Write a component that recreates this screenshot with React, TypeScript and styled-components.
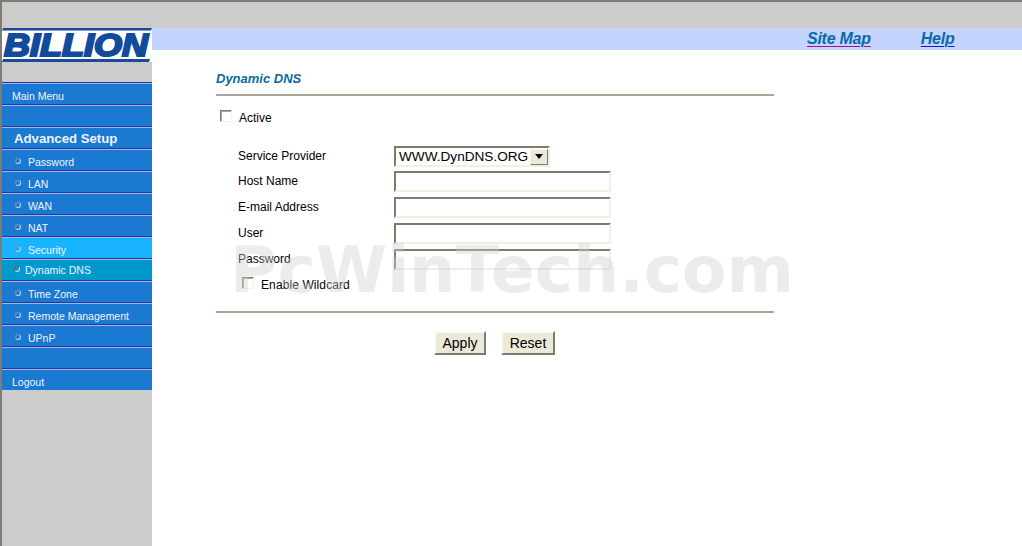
import React from "react";
import styled, { createGlobalStyle } from "styled-components";

const Global = createGlobalStyle`
  html, body { margin: 0; padding: 0; background: #fff; overflow: hidden; }
  #root { width: 1022px; height: 546px; }
`;

const Page = styled.div`
  position: relative;
  box-sizing: border-box;
  width: 1022px;
  height: 546px;
  display: grid;
  grid-template-columns: 150px 1fr;
  grid-template-rows: 26px 1fr;
  border-top: 2px solid #807c70;
  border-left: 2px solid #807c70;
  font-family: "Liberation Sans", Arial, sans-serif;
  background: #fff;
  overflow: hidden;
`;

const TopStrip = styled.div`
  grid-column: 1 / 3;
  background: #cccccc;
`;

const Sidebar = styled.aside`
  background: #cccccc;
  display: flex;
  flex-direction: column;
`;

const LogoSvg = styled.svg`
  display: block;
  width: 150px;
  height: 34px;
`;

const LogoGap = styled.div`
  height: 20px;
`;

const MenuItem = styled.div<{ $tone?: "normal" | "active" | "current"; $heading?: boolean; $pad?: number; $raised?: boolean }>`
  box-sizing: border-box;
  height: 22px;
  border-top: 1px solid #1f3a9c;
  box-shadow: inset 0 1px 0 #a4b4f0;
  background: ${(p) => (p.$tone === "active" ? "#18b4ff" : p.$tone === "current" ? "#0099cc" : "#1b79d2")};
  display: flex;
  align-items: center;
  gap: ${(p) => (p.$tone === "current" ? 5 : 7)}px;
  padding-left: ${(p) => p.$pad ?? 10}px;
  padding-top: ${(p) => (p.$raised ? 1 : 5)}px;
  color: #f0f4ff;
  font-size: ${(p) => (p.$heading ? "13.2px" : "10.5px")};
  font-weight: ${(p) => (p.$heading ? 700 : 400)};
  white-space: nowrap;
`;

const Bullet = styled.span<{ $dark?: boolean }>`
  box-sizing: border-box;
  width: 6px;
  height: 6px;
  margin-top: -3px;
  border-radius: 50%;
  border: 1px solid;
  border-color: ${(p) => (p.$dark ? "#6a5a58 #c0dce8 #c0dce8 #6a5a58" : "#7f90a5 #c8d4e4 #c8d4e4 #7f90a5")};
  flex: none;
`;

const Main = styled.main`
  background: #fff;
  display: flex;
  flex-direction: column;
`;

const LinkBar = styled.nav`
  height: 22px;
  background: #c4d4ff;
  display: flex;
  align-items: center;
  padding-left: 655px;
  gap: 50px;
`;

const TopLink = styled.a<{ $visited?: boolean }>`
  color: #0a6aa8;
  font-size: 16px;
  letter-spacing: -0.25px;
  font-weight: 700;
  font-style: italic;
  text-decoration: underline;
  text-decoration-color: ${(p) => (p.$visited ? "#a0108c" : "#0a18e8")};
  text-decoration-thickness: 1px;
  text-underline-offset: 2px;
`;

const Content = styled.section`
  width: 558px;
  margin-left: 64px;
  padding-top: 21px;
  display: flex;
  flex-direction: column;
`;

const Title = styled.h1`
  margin: 0;
  height: 23px;
  color: #0a6aa0;
  font-size: 13px;
  line-height: 15px;
  font-weight: 700;
  font-style: italic;
`;

const Rule = styled.hr<{ $top?: number }>`
  width: 100%;
  height: 2px;
  margin: ${(p) => p.$top ?? 0}px 0 0;
  border: 0;
  background: #aca899;
`;

const ActiveRow = styled.label`
  display: flex;
  align-items: center;
  gap: 7px;
  margin: 14px 0 0 4px;
  height: 16px;
  font-size: 12px;
  color: #000;
`;

const Check = styled.span`
  box-sizing: border-box;
  width: 12px;
  height: 12px;
  margin-top: -5px;
  background: #fff;
  border: 1px solid;
  border-color: #7d7a6e #f4f3ea #f4f3ea #7d7a6e;
  box-shadow: inset 1px 1px 0 #aca899;
`;

const FormGrid = styled.div`
  display: grid;
  grid-template-columns: 156px 1fr;
  grid-template-rows: 25px repeat(4, 26px);
  margin: 19px 0 0 22px;
  align-items: center;
  font-size: 12px;
  color: #000;
`;

const FieldLabel = styled.span`
  margin-top: -4px;
`;

const Field = styled.div`
  box-sizing: border-box;
  align-self: start;
  width: 217px;
  height: 21px;
  margin-top: 1px;
  background: #fff;
  border: 2px solid;
  border-color: #7d7a6e #f1efe2 #f1efe2 #7d7a6e;
`;

const Select = styled.div`
  box-sizing: border-box;
  align-self: start;
  width: 156px;
  height: 21px;
  margin-top: 1px;
  background: #fff;
  border: 2px solid;
  border-color: #7d7a6e #f1efe2 #f1efe2 #7d7a6e;
  display: flex;
  align-items: center;
  justify-content: space-between;
  padding-left: 3px;
  font-size: 13.6px;
  color: #000;
`;

const SelectArrow = styled.span`
  box-sizing: border-box;
  width: 18px;
  height: 16px;
  background: #ece9d8;
  border: 1px solid;
  border-color: #f8f7ee #7d7a6e #7d7a6e #f8f7ee;
  display: flex;
  align-items: center;
  justify-content: center;
  &::after {
    content: "";
    border-left: 4px solid transparent;
    border-right: 4px solid transparent;
    border-top: 5px solid #000;
  }
`;

const WildcardRow = styled.label`
  display: flex;
  align-items: center;
  gap: 7px;
  margin: 3px 0 0 26px;
  height: 16px;
  font-size: 12px;
  letter-spacing: 0.1px;
  color: #000;
`;

const Buttons = styled.div`
  display: flex;
  gap: 15px;
  margin: 18px 0 0 218px;
`;

const Button = styled.button<{ $width: number }>`
  box-sizing: border-box;
  width: ${(p) => p.$width}px;
  height: 24px;
  padding: 0;
  background: #ece9d8;
  border: 2px solid;
  border-color: #fbfaf4 #7d7a6e #7d7a6e #fbfaf4;
  font-family: "Liberation Sans", Arial, sans-serif;
  font-size: 14px;
  color: #000;
`;

const Watermark = styled.div`
  position: absolute;
  left: 228px;
  top: 235px;
  font-family: "DejaVu Sans", sans-serif;
  font-size: 64.7px;
  font-weight: 700;
  line-height: 66px;
  color: rgba(208, 208, 208, 0.4);
  white-space: nowrap;
  pointer-events: none;
`;

const items = ["Password", "LAN", "WAN", "NAT"];
const lower = ["Time Zone", "Remote Management", "UPnP"];

export default function App() {
  return (
    <Page>
      <Global />
      <TopStrip />
      <Sidebar>
        <LogoSvg viewBox="0 0 150 34" aria-label="Billion logo">
          <rect width="150" height="34" fill="#fff" />
          <polygon points="1,0 150,0 149,2.6 0,2.6" fill="#1a4a9c" />
          <polygon points="1,31 148,31 147,34 0,34" fill="#1a4a9c" />
          <text
            x="2"
            y="28"
            textLength="144"
            lengthAdjust="spacingAndGlyphs"
            fontFamily="'Liberation Sans', sans-serif"
            fontWeight="700"
            fontStyle="italic"
            fontSize="32"
            fill="#124a9c"
            stroke="#124a9c"
            strokeWidth="2.2"
          >
            BILLION
          </text>
        </LogoSvg>
        <LogoGap />
        <MenuItem>Main Menu</MenuItem>
        <MenuItem />
        <MenuItem $heading $pad={12} $raised>Advanced Setup</MenuItem>
        {items.map((t) => (
          <MenuItem key={t} $pad={13}><Bullet />{t}</MenuItem>
        ))}
        <MenuItem $tone="active" $pad={13}><Bullet />Security</MenuItem>
        <MenuItem $tone="current" $pad={12} $raised><Bullet $dark />Dynamic DNS</MenuItem>
        {lower.map((t) => (
          <MenuItem key={t} $pad={13}><Bullet />{t}</MenuItem>
        ))}
        <MenuItem />
        <MenuItem>Logout</MenuItem>
      </Sidebar>
      <Main>
        <LinkBar>
          <TopLink $visited>Site Map</TopLink>
          <TopLink>Help</TopLink>
        </LinkBar>
        <Content>
          <Title>Dynamic DNS</Title>
          <Rule />
          <ActiveRow><Check />Active</ActiveRow>
          <FormGrid>
            <FieldLabel>Service Provider</FieldLabel>
            <Select>WWW.DynDNS.ORG<SelectArrow /></Select>
            <FieldLabel>Host Name</FieldLabel>
            <Field />
            <FieldLabel>E-mail Address</FieldLabel>
            <Field />
            <FieldLabel>User</FieldLabel>
            <Field />
            <FieldLabel>Password</FieldLabel>
            <Field />
          </FormGrid>
          <WildcardRow><Check />Enable Wildcard</WildcardRow>
          <Rule $top={18} />
          <Buttons>
            <Button $width={52}>Apply</Button>
            <Button $width={54}>Reset</Button>
          </Buttons>
        </Content>
      </Main>
      <Watermark>PcWinTech.com</Watermark>
    </Page>
  );
}
